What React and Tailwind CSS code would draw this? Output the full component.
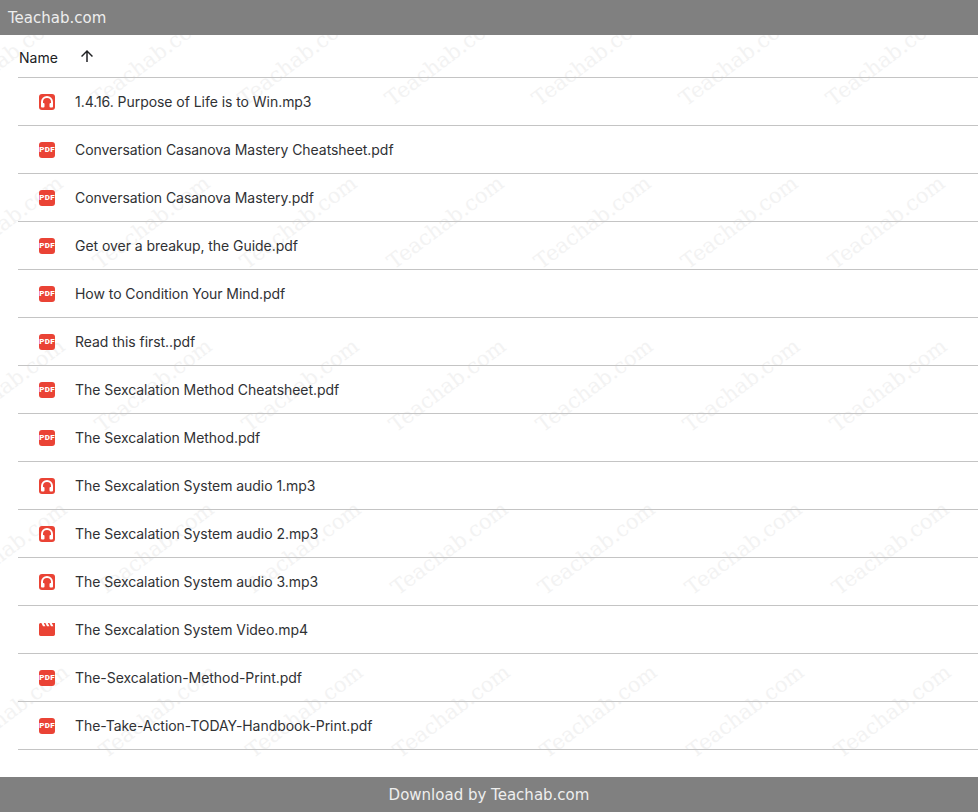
import React from 'react'

const files = [
    { name: '1.4.16. Purpose of Life is to Win.mp3', type: 'audio' },
    { name: 'Conversation Casanova Mastery Cheatsheet.pdf', type: 'pdf' },
    { name: 'Conversation Casanova Mastery.pdf', type: 'pdf' },
    { name: 'Get over a breakup, the Guide.pdf', type: 'pdf' },
    { name: 'How to Condition Your Mind.pdf', type: 'pdf' },
    { name: 'Read this first..pdf', type: 'pdf' },
    { name: 'The Sexcalation Method Cheatsheet.pdf', type: 'pdf' },
    { name: 'The Sexcalation Method.pdf', type: 'pdf' },
    { name: 'The Sexcalation System audio 1.mp3', type: 'audio' },
    { name: 'The Sexcalation System audio 2.mp3', type: 'audio' },
    { name: 'The Sexcalation System audio 3.mp3', type: 'audio' },
    { name: 'The Sexcalation System Video.mp4', type: 'video' },
    { name: 'The-Sexcalation-Method-Print.pdf', type: 'pdf' },
    { name: 'The-Take-Action-TODAY-Handbook-Print.pdf', type: 'pdf' },
]

// repeated watermark, each row drifts 2px to the right
const marks = []
for (let row = 0; row < 5; row++) {
    for (let col = -4; col < 3; col++) {
        marks.push({ x: 591 + row * 2 + col * 147, y: 25 + row * 163 })
    }
}

function FileIcon({ type }) {
    if (type === 'pdf') {
        return (
            <div className="w-4 h-4 rounded-[3px] bg-[#ea4335] flex items-center justify-center">
                <span className="text-[8px] leading-none tracking-[0.3px] font-black text-white font-['Roboto',sans-serif]">PDF</span>
            </div>
        )
    }
    if (type === 'audio') {
        return (
            <div className="w-4 h-4 rounded-[3px] bg-[#ea4335] flex items-center justify-center">
                <svg width="16" height="16" viewBox="0 0 16 16" fill="none">
                    <path d="M3 11V8a5 5 0 0 1 10 0V11" stroke="white" strokeWidth="2" />
                    <rect x="2" y="9" width="3.5" height="4.5" rx="1" fill="white" />
                    <rect x="10.5" y="9" width="3.5" height="4.5" rx="1" fill="white" />
                </svg>
            </div>
        )
    }
    return (
        <svg width="16" height="13" viewBox="2 4 20 16">
            <path fill="#ea4335" d="M18 4l2 4h-3l-2-4h-2l2 4h-3l-2-4H8l2 4H7L5 4H4c-1.1 0-1.99.9-1.99 2L2 18c0 1.1.9 2 2 2h16c1.1 0 2-.9 2-2V4h-4z" />
        </svg>
    )
}

export default function App() {
    return (
        <div className="h-screen flex flex-col bg-white overflow-hidden">
            <div className="h-[35px] shrink-0 bg-[#808080] flex items-center pl-2 pt-px text-[15px] text-[#eeeeee] font-['DejaVu_Sans',sans-serif]">
                Teachab.com
            </div>

            <div className="relative flex-1 overflow-hidden font-['Inter',sans-serif]">
                {/* Watermark */}
                {marks.map((m) => (
                    <span
                        key={`${m.x}-${m.y}`}
                        className="absolute -translate-x-1/2 -translate-y-1/2 rotate-[-37deg] whitespace-nowrap pointer-events-none text-[21px] text-[#f3f3f3] font-['DejaVu_Serif',serif]"
                        style={{ left: m.x, top: m.y }}
                    >
                        Teachab.com
                    </span>
                ))}

                <div className="relative pl-[18px]">
                    {/* Header row */}
                    <div className="h-[43px] flex items-center pt-[3px] border-b border-[#c4c4c4] text-sm text-[#202124]">
                        <span className="ml-px">Name</span>
                        <svg width="18" height="18" viewBox="0 0 24 24" className="ml-5 -mt-[3px]">
                            <path fill="#202124" d="M4 12l1.41 1.41L11 7.83V20h2V7.83l5.58 5.59L20 12l-8-8-8 8z" />
                        </svg>
                    </div>

                    {files.map((file) => (
                        <div key={file.name} className="h-12 flex items-center border-b border-[#c4c4c4]">
                            <div className="w-4 ml-[21px] flex justify-center">
                                <FileIcon type={file.type} />
                            </div>
                            <span className="ml-5 text-sm tracking-[-0.05px] text-[#303134]">{file.name}</span>
                        </div>
                    ))}
                </div>
            </div>

            <div className="h-[35px] shrink-0 bg-[#808080] flex items-center justify-center pt-px text-[15px] text-[#eeeeee] font-['DejaVu_Sans',sans-serif]">
                Download by Teachab.com
            </div>
        </div>
    )
}
